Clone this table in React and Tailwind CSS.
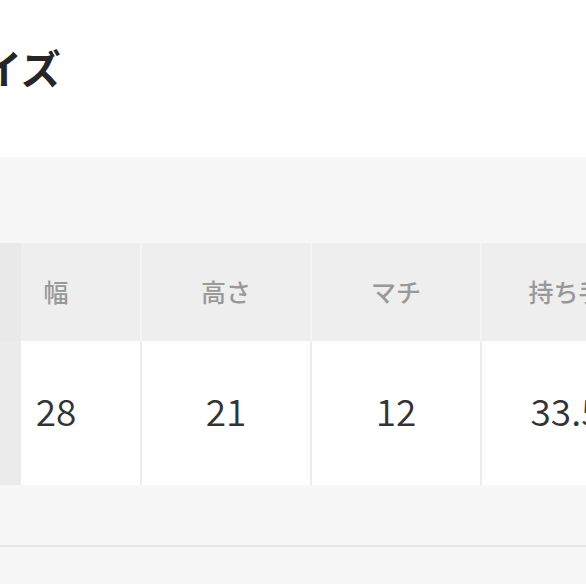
const columns = [
  { label: "幅", value: "28" },
  { label: "高さ", value: "21" },
  { label: "マチ", value: "12" },
  { label: "持ち手", value: "33.5" },
];

function SizeTable() {
  return (
    <div className="flex">
      {/* sticky label column, only its edge shows */}
      <div className="flex w-[21px] shrink-0 flex-col">
        <div className="h-[98px] bg-[#e9e9e9]" />
        <div className="h-[144px] bg-[#ebebeb]" />
      </div>
      <div className="flex-1 overflow-hidden">
        <div className="-ml-[49px] flex w-max flex-col">
          <div className="flex h-[98px] gap-[2px] bg-[#f4f4f4]">
            {columns.map((c) => (
              <div
                key={c.label}
                className="flex w-[168px] items-center justify-center bg-[#eeeeee] text-[25px] font-medium text-[#999999]"
              >
                {c.label}
              </div>
            ))}
          </div>
          <div className="flex h-[144px] gap-[2px] bg-[#ededed]">
            {columns.map((c) => (
              <div
                key={c.label}
                className="flex w-[168px] items-center justify-center bg-white pb-[4px] text-[37px] font-[350] text-[#333333]"
              >
                {c.value}
              </div>
            ))}
          </div>
        </div>
      </div>
    </div>
  );
}

export default function App() {
  return (
    <div
      className="h-[586px] w-[586px] overflow-hidden bg-white"
      style={{ fontFamily: '"Noto Sans CJK JP", "Noto Sans", sans-serif' }}
    >
      <div className="flex h-[157px] items-start pt-[40px]">
        <h2 className="-ml-[58px] whitespace-nowrap text-[40px] font-bold leading-[54px] text-[#262626]">
          サイズ
        </h2>
      </div>
      <div className="bg-[#f7f7f7]">
        <div className="h-[86px]" />
        <SizeTable />
        <div className="h-[62px] border-b-2 border-[#e6e6e6]" />
        <div className="h-[37px]" />
      </div>
    </div>
  );
}
